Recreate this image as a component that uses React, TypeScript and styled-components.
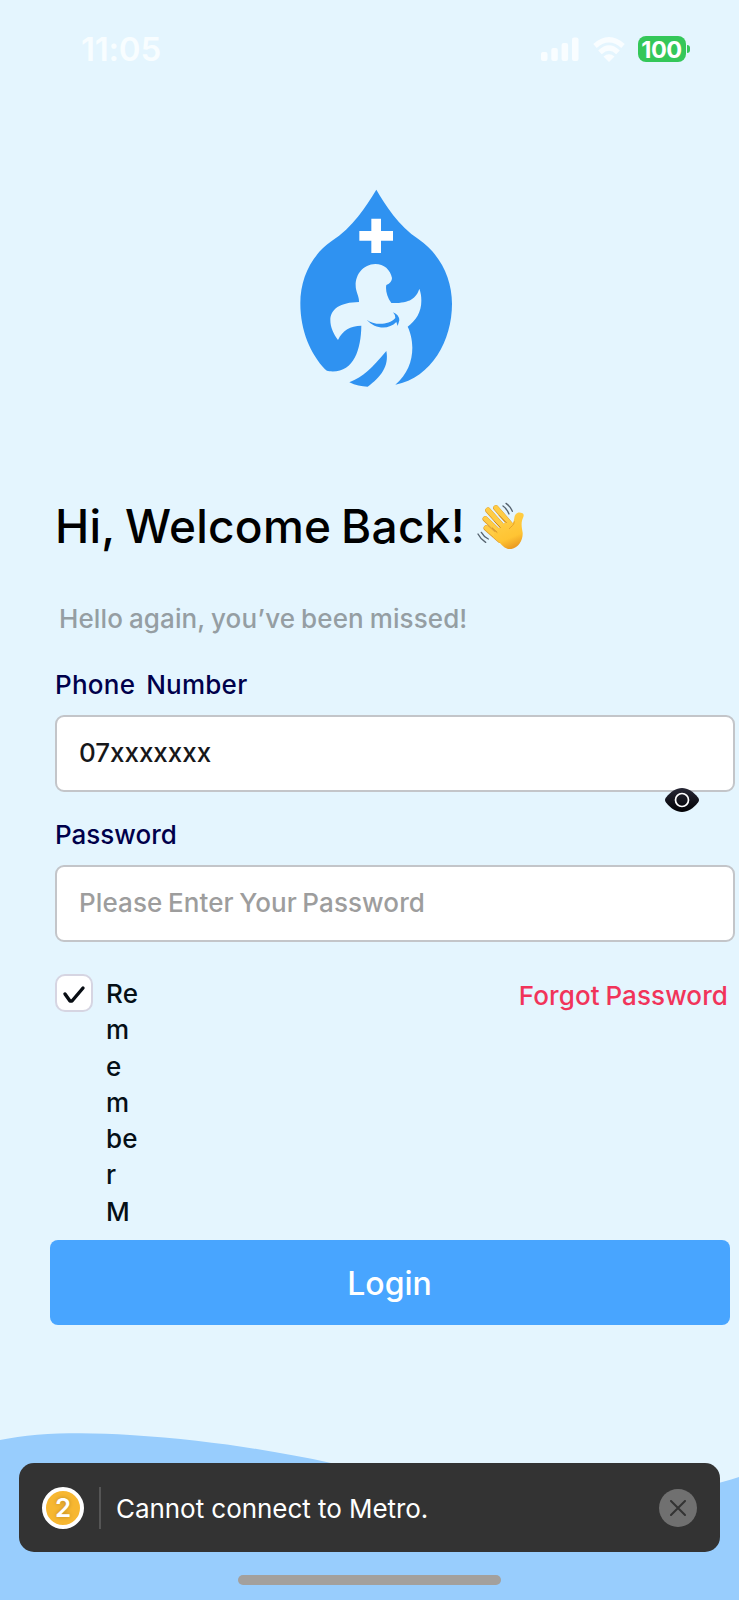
import React from "react";
import styled, { createGlobalStyle } from "styled-components";

const Global = createGlobalStyle`
  * { box-sizing: border-box; }
  body { margin: 0; background: #e4f5fe; }
  button, input { font-family: inherit; }
`;

const Screen = styled.main`
  position: relative;
  width: 739px;
  height: 1600px;
  overflow: hidden;
  background: #e4f5fe;
  font-family: Inter, "Liberation Sans", sans-serif;
  font-weight: 500;
  display: flex;
  flex-direction: column;
`;

const StatusBar = styled.header`
  display: flex;
  align-items: center;
  justify-content: space-between;
  height: 100px;
  padding: 0 49px 2px 81px;
`;

const Clock = styled.time`
  font-size: 33px;
  font-weight: 600;
  letter-spacing: -0.2px;
  color: #f8fdff;
`;

const StatusIcons = styled.div`
  display: flex;
  align-items: center;
  gap: 10px;
`;

const Battery = styled.div`
  display: flex;
  align-items: center;
  gap: 1px;
  margin-left: 3px;
`;

const BatteryBody = styled.span`
  display: flex;
  align-items: center;
  justify-content: center;
  width: 48px;
  height: 26px;
  margin-right: 0.5px;
  border-radius: 8px;
  background: #34c759;
  color: #fff;
  font-size: 23.5px;
  font-weight: 700;
  letter-spacing: -0.5px;
`;

const BatteryTip = styled.span`
  width: 3px;
  height: 8px;
  border-radius: 0 3px 3px 0;
  background: #34c759;
`;

const LogoArea = styled.div`
  display: flex;
  justify-content: center;
  height: 399px;
  padding: 80px 0 0 13px;
`;

const Content = styled.section`
  display: flex;
  flex-direction: column;
  width: 680px;
  margin-left: 55px;
`;

const Title = styled.h1`
  display: flex;
  align-items: center;
  gap: 12px;
  height: 56px;
  margin: 0;
  padding-bottom: 2px;
  font-size: 46px;
  font-weight: 500;
  letter-spacing: 0.25px;
  word-spacing: -2.7px;
  white-space: nowrap;
  color: #000;
`;

const Subtitle = styled.p`
  height: 32px;
  margin: 48px 0 0 4px;
  font-size: 26px;
  line-height: 32px;
  letter-spacing: 0.1px;
  word-spacing: -1px;
  color: #959ea3;
`;

const Field = styled.div<{ $gap: number }>`
  position: relative;
  margin-top: ${(p) => p.$gap}px;
  display: flex;
  flex-direction: column;
  gap: 14px;
`;

const Label = styled.label<{ $tracking: number }>`
  height: 32px;
  font-size: 26px;
  line-height: 32px;
  letter-spacing: ${(p) => p.$tracking}px;
  word-spacing: -1.7px;
  white-space: pre;
  color: #00004b;
`;

const Input = styled.input<{ $tracking: number }>`
  width: 680px;
  height: 77px;
  padding: 0 22px 3px;
  border: 2px solid #c3c5c9;
  border-radius: 9px;
  outline: none;
  background: #fff;
  font-size: 26px;
  font-weight: 500;
  letter-spacing: ${(p) => p.$tracking}px;
  word-spacing: -1.5px;
  color: #17171a;
  &::placeholder { color: #9d9d9d; opacity: 1; }
`;

const EyeButton = styled.button`
  position: absolute;
  top: -31px;
  right: 36px;
  display: flex;
  padding: 0;
  border: 0;
  background: none;
`;

const Options = styled.div`
  display: flex;
  justify-content: space-between;
  height: 266px;
  margin-top: 32px;
  padding-right: 7px;
`;

const Remember = styled.div`
  display: flex;
  gap: 13px;
`;

const CheckBox = styled.span`
  display: flex;
  align-items: center;
  justify-content: center;
  width: 38px;
  height: 38px;
  padding-top: 3px;
  border: 2px solid #d6d5e2;
  border-radius: 10px;
  background: #fff;
`;

const RememberText = styled.span`
  width: 38px;
  height: 258px;
  padding-top: 2px;
  overflow: hidden;
  font-size: 26px;
  line-height: 36.3px;
  letter-spacing: 0.2px;
  white-space: pre-line;
  color: #050f16;
`;

const Forgot = styled.a`
  height: 44px;
  font-size: 26px;
  line-height: 44px;
  letter-spacing: 0.1px;
  word-spacing: -1.3px;
  white-space: nowrap;
  color: #f1345a;
`;

const LoginButton = styled.button`
  width: 680px;
  height: 85px;
  margin-left: -5.5px;
  padding: 1px 0 0;
  border: 0;
  border-radius: 8px;
  background: #48a5ff;
  font-size: 32px;
  font-weight: 500;
  letter-spacing: 0;
  color: #fff;
`;

const Wave = styled.svg`
  position: absolute;
  left: 0;
  bottom: 0;
`;

const Toast = styled.aside`
  position: absolute;
  left: 19px;
  bottom: 48px;
  display: flex;
  align-items: center;
  width: 701px;
  height: 89px;
  padding: 0 23px;
  border-radius: 15px;
  background: #333;
`;

const Count = styled.span`
  display: flex;
  align-items: center;
  justify-content: center;
  width: 42px;
  height: 42px;
  border: 4px solid #fff;
  border-radius: 50%;
  background: #f7b731;
  font-size: 26px;
  font-weight: 600;
  color: #fff;
  text-shadow: 0 0 4px rgba(0, 0, 0, 0.25);
`;

const Divider = styled.span`
  width: 2px;
  height: 42px;
  margin: 0 14px 0 15px;
  background: #555;
`;

const Message = styled.span`
  flex: 1;
  padding: 1px 0 0 1px;
  font-size: 26px;
  font-weight: 400;
  letter-spacing: -0.05px;
  color: #fff;
`;

const Close = styled.button`
  display: flex;
  align-items: center;
  justify-content: center;
  width: 38px;
  height: 38px;
  padding: 0;
  border: 0;
  border-radius: 50%;
  background: #707070;
`;

const HomeIndicator = styled.span`
  position: absolute;
  left: 238px;
  bottom: 15px;
  width: 263px;
  height: 10px;
  border-radius: 5px;
  background: #a3a09d;
`;

const Signal = () => (
  <svg width="42" height="25" viewBox="0 0 42 25" fill="#f9fdff">
    <rect x="0" y="15" width="6.5" height="9" rx="2" />
    <rect x="10.3" y="11" width="6.5" height="13" rx="2" />
    <rect x="20.6" y="6" width="6.5" height="18" rx="2" />
    <rect x="31" y="0.5" width="6.5" height="23.5" rx="2" />
  </svg>
);

const Wifi = () => (
  <svg width="32" height="25" viewBox="0 0 32 25" fill="none" stroke="#f9fdff" strokeWidth="5.2">
    <path d="M2 9Q16-3.5 30 9M7 15.4Q16 6.8 25 15.4" />
    <path d="M16 25L10.5 19.4Q16 15 21.5 19.4Z" fill="#f9fdff" stroke="none" />
  </svg>
);

const Logo = () => (
  <svg width="172" height="215" viewBox="0 0 516 645">
    <path fill="#2f92f1" d="M259 29C286 75 325 137 386 178C450 222 486 295 486 371C486 481 426 592 316 614C352 582 367 544 367 503C367 479 361 456 353 440C378 420 394 397 394 362C394 347 392 337 388 326C378 356 359 370 304 369C290 351 286 327 289 315Q306 308 306 294C301 269 282 252 256 252C219 253 197 283 197 316C197 337 208 349 207 366C150 367 121 388 121 420C121 442 131 463 144 480C158 450 181 438 214 437C213 511 190 581 118 574Q110 574 105 568C62 522 31 453 31 370C31 295 64 226 124 184C190 140 226 82 259 29Z" />
    <path fill="#2f92f1" d="M289 513C246 564 220 590 178 607Q205 620 233 620C272 592 298 559 289 513Z" />
    <path fill="#2f92f1" d="M230 419C250 435 294 438 316 414Q316 404 309 397Q328 405 328 421L323 438L319 426C296 450 256 448 230 419Z" />
    <path fill="#fff" d="M244 116H273V153H309V182H273V219H244V182H208V153H244Z" />
  </svg>
);

const Hand = () => (
  <svg width="48" height="48" viewBox="36 36 144 144" fill="none" strokeLinecap="round">
    <defs>
      <linearGradient id="palm" gradientUnits="userSpaceOnUse" x1="100" y1="70" x2="145" y2="177">
        <stop offset="0" stopColor="#ffd04a" />
        <stop offset="0.7" stopColor="#ffc433" />
        <stop offset="1" stopColor="#e8961f" />
      </linearGradient>
    </defs>
    <g stroke="#dc9827" strokeWidth="17">
      <path d="M64 114L105 150" />
      <path d="M61 87L108 132" />
      <path d="M69 61L118 116" />
      <path d="M93 54L138 106" />
    </g>
    <g stroke="#ffcc45" strokeWidth="14">
      <path d="M64 113L105 149" />
      <path d="M61 86L108 131" />
      <path d="M69 60L118 115" />
      <path d="M93 53L138 105" />
    </g>
    <path fill="url(#palm)" d="M90 126L130 88L141 103Q147 96 148 84C149 73 157 65 167 68Q179 69 175 81C167 98 170 110 173 128C174 150 161 173 139 177C120 179 110 164 98 152L84 141Z" />
    <path d="M82 114L96 127M89 95L106 112M103 77L124 98" stroke="#cf8a20" strokeWidth="3" />
    <path d="M148 95C147 107 139 108 133 116" stroke="#e6a22b" strokeWidth="3" />
    <path d="M114 48Q126 57 132 72M123 40Q136 49 142 64M39 132Q47 148 62 157M49 127Q57 141 70 147" stroke="#56636f" strokeWidth="4" />
  </svg>
);

const Eye = () => (
  <svg width="34" height="24" viewBox="0 0 34 24">
    <defs>
      <linearGradient id="lid" x1="0" y1="0" x2="0" y2="1">
        <stop stopColor="#272735" /><stop offset="1" stopColor="#010104" />
      </linearGradient>
    </defs>
    <path fill="url(#lid)" d="M17 0C23 0 28 3.5 33 9.5Q35 12 33 14.5C28 20.5 23 24 17 24S6 20.5 1 14.5Q-1 12 1 9.5C6 3.5 11 0 17 0Z" />
    <circle cx="17" cy="12" r="6.5" fill="none" stroke="#fff" strokeWidth="1.7" />
  </svg>
);

export default function App() {
  return (
    <>
      <Global />
      <Screen>
        <StatusBar>
          <Clock>11:05</Clock>
          <StatusIcons>
            <Signal />
            <Wifi />
            <Battery><BatteryBody>100</BatteryBody><BatteryTip /></Battery>
          </StatusIcons>
        </StatusBar>
        <LogoArea><Logo /></LogoArea>
        <Content>
          <Title>Hi, Welcome Back! <Hand /></Title>
          <Subtitle>Hello again, you’ve been missed!</Subtitle>
          <Field $gap={34}>
            <Label htmlFor="phone" $tracking={0.25}>Phone  Number</Label>
            <Input id="phone" $tracking={-0.05} defaultValue="07xxxxxxx" />
          </Field>
          <Field $gap={27}>
            <Label htmlFor="password" $tracking={0}>Password</Label>
            <Input id="password" type="password" $tracking={0.1} placeholder="Please Enter Your Password" />
            <EyeButton aria-label="Show password"><Eye /></EyeButton>
          </Field>
          <Options>
            <Remember>
              <CheckBox>
                <svg width="24" height="20" viewBox="0 0 24 20" fill="none" stroke="#080d13" strokeWidth="3.4" strokeLinecap="round" strokeLinejoin="round">
                  <path d="M3 9L8 16H10L21 3" />
                </svg>
              </CheckBox>
              <RememberText>{"Re\nm\ne\nm\nbe\nr\nM"}</RememberText>
            </Remember>
            <Forgot>Forgot Password</Forgot>
          </Options>
          <LoginButton>Login</LoginButton>
        </Content>
        <Wave width="739" height="180" viewBox="0 1420 739 180">
          <path fill="#98cdfd" d="M0 1440C35 1432 90 1432 130 1435C210 1440 275 1451 331 1463C430 1485 620 1517 739 1477V1600H0Z" />
        </Wave>
        <Toast>
          <Count>2</Count>
          <Divider />
          <Message>Cannot connect to Metro.</Message>
          <Close aria-label="Dismiss">
            <svg width="16" height="16" viewBox="0 0 16 16" stroke="#333" strokeWidth="2" strokeLinecap="round"><path d="M1 1L15 15M15 1L1 15" /></svg>
          </Close>
        </Toast>
        <HomeIndicator />
      </Screen>
    </>
  );
}
